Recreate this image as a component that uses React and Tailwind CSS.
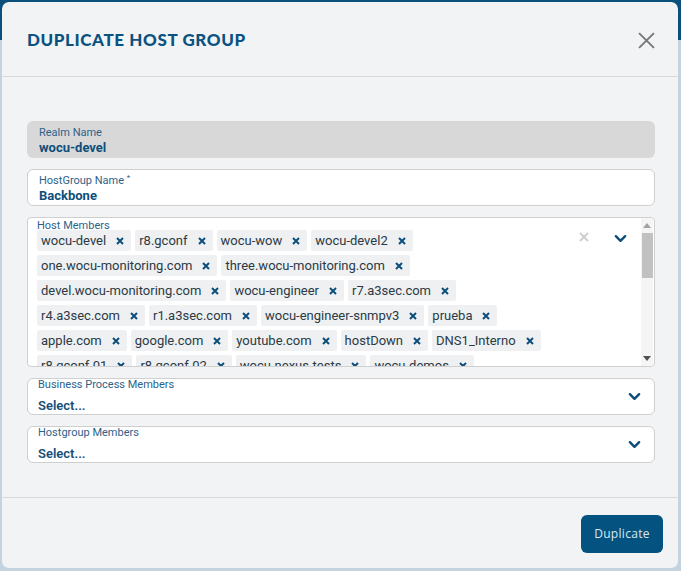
import React from "react";

const rows = [
  ["wocu-devel", "r8.gconf", "wocu-wow", "wocu-devel2"],
  ["one.wocu-monitoring.com", "three.wocu-monitoring.com"],
  ["devel.wocu-monitoring.com", "wocu-engineer", "r7.a3sec.com"],
  ["r4.a3sec.com", "r1.a3sec.com", "wocu-engineer-snmpv3", "prueba"],
  ["apple.com", "google.com", "youtube.com", "hostDown", "DNS1_Interno"],
  ["r8.gconf.01", "r8.gconf.02", "wocu-nexus-tests", "wocu-demos"],
];

function Chevron({ className }) {
  return (
    <svg className={className} viewBox="0 0 14 9" fill="none" stroke="currentColor" strokeWidth="2.6" strokeLinecap="round" strokeLinejoin="round">
      <path d="M2 2l5 5 5-5" />
    </svg>
  );
}

function Chip({ label }) {
  return (
    <div className="flex items-center h-[21px] bg-[#eef0f2] rounded-[2px] pl-[4px] pr-[7px] text-[13px] text-[#2b3a45]">
      <span>{label}</span>
      <svg className="ml-[10px] w-[8px] h-[8px] text-[#0d4f7a]" viewBox="0 0 8 8" stroke="currentColor" strokeWidth="2">
        <path d="M1 1l6 6M7 1l-6 6" />
      </svg>
    </div>
  );
}

function SelectBox({ label }) {
  return (
    <div className="flex items-center h-[37px] bg-white border border-[#cfcfcf] rounded-[6px] pl-[10px] pr-[13px]">
      <div className="flex-1 flex flex-col">
        <span className="text-[11px] leading-[13px] text-[#2c628a] mt-[-1px]">{label}</span>
        <span className="text-[13px] leading-[16px] font-semibold text-[#174f78] mt-[7px]">Select...</span>
      </div>
      <Chevron className="w-[13px] h-[9px] text-[#0d4f7a]" />
    </div>
  );
}

export default function App() {
  return (
    <div className="relative w-[681px] h-[571px] bg-[#c4d3de] overflow-hidden" style={{ fontFamily: "Roboto, 'Liberation Sans', sans-serif" }}>
      <div className="absolute left-0 top-0 w-full h-[40px] bg-[#0b4f7c]" />
      <div className="absolute left-[2px] top-[2px] w-[676px] h-[566px] bg-[#f2f3f5] rounded-[7px] flex flex-col">
        {/* Header */}
        <div className="h-[75px] flex items-center justify-between pl-[25px] pr-[23px] border-b border-[#d6d8da]">
          <h1 className="text-[17px] font-black tracking-[0.6px] text-[#0b5282] mt-[1px]" style={{ fontFamily: "Lato, 'Open Sans', sans-serif" }}>
            DUPLICATE HOST GROUP
          </h1>
          <svg className="w-[17px] h-[17px] text-[#777] mt-[3px]" viewBox="0 0 16 16" stroke="currentColor" strokeWidth="1.8">
            <path d="M1 1l14 14M15 1L1 15" />
          </svg>
        </div>

        {/* Body */}
        <div className="flex-1 pt-[44px] pl-[25px] pr-[23px] flex flex-col gap-[11px] border-b border-[#d6d8da]">
          <div className="h-[37px] bg-[#d9d8d8] rounded-[6px] pl-[12px] pt-[3px] flex flex-col justify-center">
            <span className="text-[11px] leading-[13px] text-[#2c628a]">Realm Name</span>
            <span className="text-[13px] leading-[16px] font-bold text-[#0d4f7a] mt-[1px]">wocu-devel</span>
          </div>

          <div className="h-[37px] bg-white border border-[#cfcfcf] rounded-[6px] pl-[11px] pt-[3px] flex flex-col justify-center">
            <span className="text-[11px] leading-[13px] text-[#2c628a]">HostGroup Name <sup className="text-[8px]">*</sup></span>
            <span className="text-[13px] leading-[16px] font-bold text-[#0d4f7a] mt-[1px]">Backbone</span>
          </div>

          <div className="relative h-[150px] bg-white border border-[#cfcfcf] rounded-[4px] flex overflow-hidden">
            <div className="flex-1 pl-[9px] pt-[3px] overflow-hidden">
              <div className="text-[11px] leading-[10px] text-[#2c628a]">Host Members</div>
              <div className="flex flex-col gap-[4px] mt-[-1px]">
                {rows.map((r, i) => (
                  <div key={i} className="flex gap-[4px]">
                    {r.map((c) => (
                      <Chip key={c} label={c} />
                    ))}
                  </div>
                ))}
              </div>
            </div>
            <div className="flex items-start pt-[13px] gap-[25px] pr-[14px]">
              <svg className="w-[10px] h-[10px] text-[#cccccc] mt-[1px]" viewBox="0 0 10 10" stroke="currentColor" strokeWidth="1.8">
                <path d="M1 1l8 8M9 1l-8 8" />
              </svg>
              <Chevron className="w-[13px] h-[9px] text-[#0d4f7a] mt-[3px]" />
            </div>
            <div className="w-[12px] mr-[1px] flex flex-col items-center bg-[#f5f5f5]">
              <div className="h-[15px] flex items-center">
                <div className="w-0 h-0 border-l-[4px] border-r-[4px] border-b-[5px] border-l-transparent border-r-transparent border-b-[#a3a3a3]" />
              </div>
              <div className="w-[11px] h-[45px] bg-[#c1c1c1]" />
              <div className="flex-1" />
              <div className="h-[15px] flex items-center">
                <div className="w-0 h-0 border-l-[4px] border-r-[4px] border-t-[5px] border-l-transparent border-r-transparent border-t-[#505050]" />
              </div>
            </div>
          </div>

          <SelectBox label="Business Process Members" />
          <SelectBox label="Hostgroup Members" />
        </div>

        {/* Footer */}
        <div className="h-[70px] flex items-start justify-end pt-[17px] pr-[15px]">
          <button className="w-[82px] h-[38px] bg-[#03527f] rounded-[6px] text-[12px] text-[#dce8f0] tracking-[0.3px]" style={{ fontFamily: "'Open Sans', sans-serif" }}>
            Duplicate
          </button>
        </div>
      </div>
    </div>
  );
}
